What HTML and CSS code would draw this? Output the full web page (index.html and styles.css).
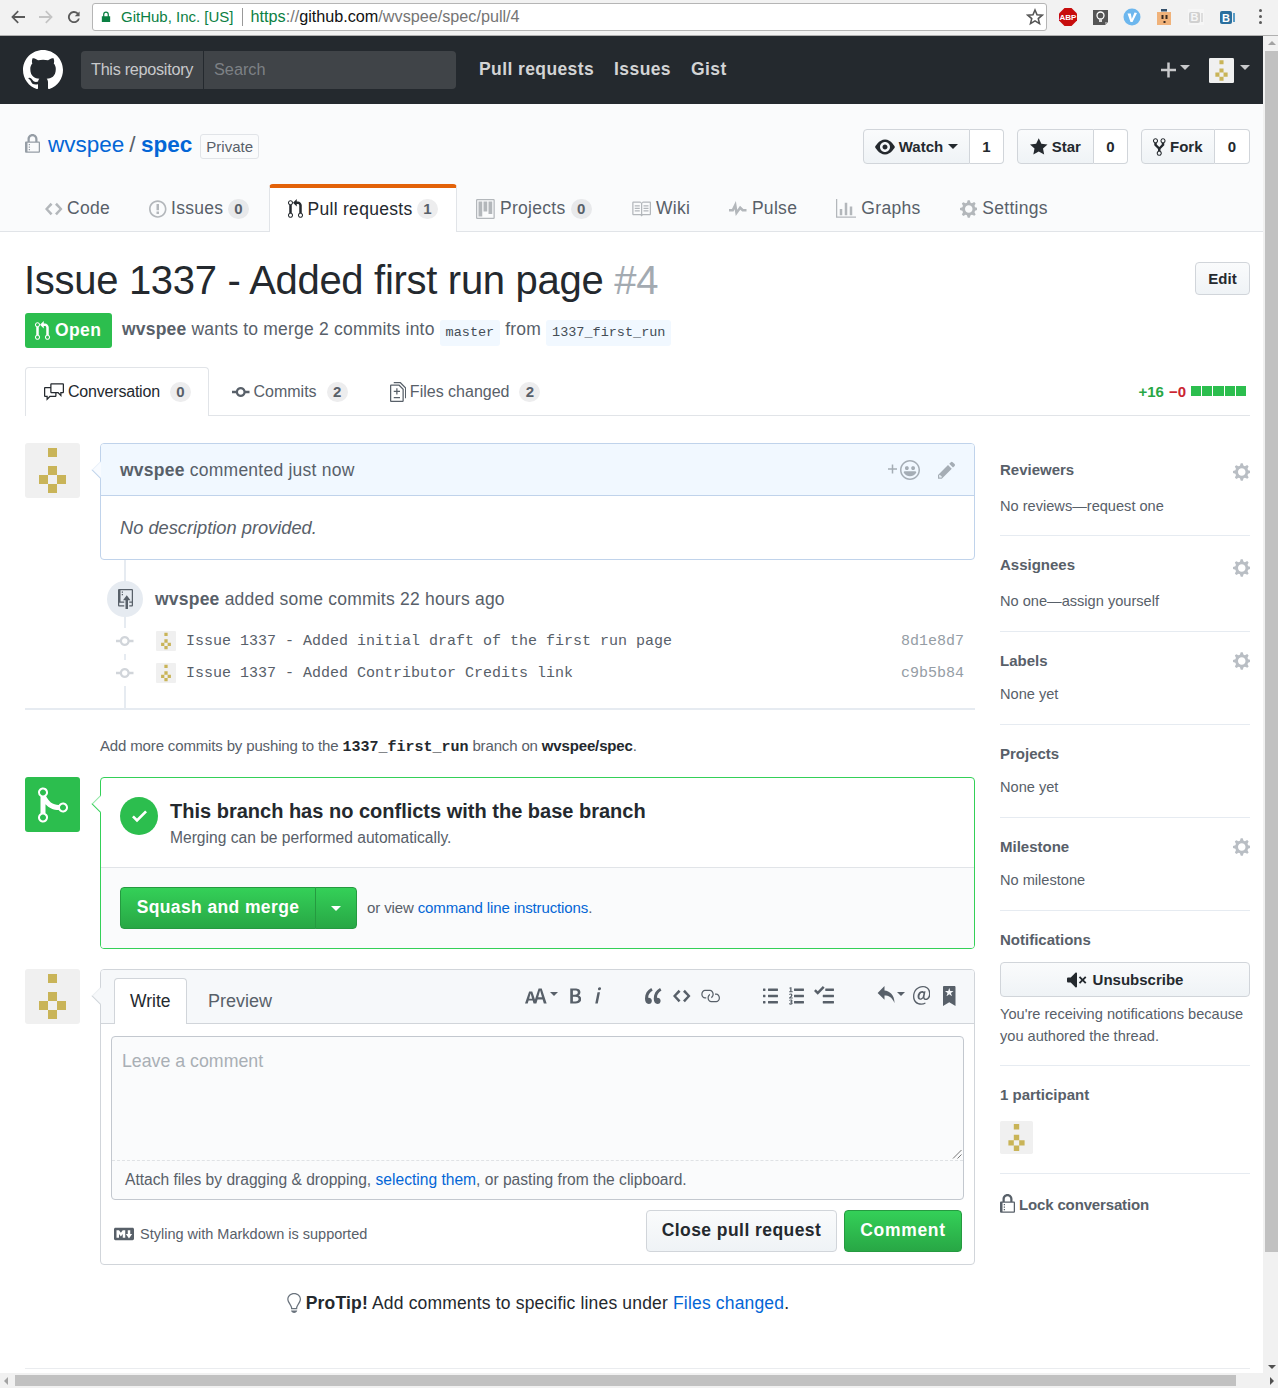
FILE: index.html
```html
<!DOCTYPE html>
<html lang="en">
<head>
    <meta charset="UTF-8">
    <meta name="viewport" content="width=device-width, initial-scale=1.0">
    <title>Issue 1337 - Added first run page by wvspee · Pull Request #4 · wvspee/spec</title>
    <link rel="stylesheet" href="styles.css">
</head>
<body>

<svg class="sprite" aria-hidden="true">
    <defs>
        <path id="i-github" d="M8 0C3.58 0 0 3.58 0 8c0 3.54 2.29 6.53 5.47 7.59.4.07.55-.17.55-.38 0-.19-.01-.82-.01-1.49-2.01.37-2.53-.49-2.69-.94-.09-.23-.48-.94-.82-1.13-.28-.15-.68-.52-.01-.53.63-.01 1.08.58 1.23.82.72 1.21 1.87.87 2.33.66.07-.52.28-.87.51-1.07-1.78-.2-3.64-.89-3.64-3.95 0-.87.31-1.59.82-2.15-.08-.2-.36-1.02.08-2.12 0 0 .67-.21 2.2.82.64-.18 1.32-.27 2-.27.68 0 1.36.09 2 .27 1.53-1.04 2.2-.82 2.2-.82.44 1.1.16 1.92.08 2.12.51.56.82 1.27.82 2.15 0 3.07-1.87 3.75-3.65 3.95.29.25.54.73.54 1.48 0 1.07-.01 1.93-.01 2.2 0 .21.15.46.55.38A8.013 8.013 0 0 0 16 8c0-4.42-3.58-8-8-8z"/>
        <path id="i-pr" d="M11 11.28V5c-.03-.78-.34-1.47-.94-2.06C9.46 2.35 8.78 2.03 8 2H7V0L4 3l3 3V4h1c.27.02.48.11.69.31.21.2.3.42.31.69v6.28A1.993 1.993 0 0 0 10 15a1.993 1.993 0 0 0 1-3.72zm-1 2.92c-.66 0-1.2-.55-1.2-1.2 0-.65.55-1.2 1.2-1.2.65 0 1.2.55 1.2 1.2 0 .65-.55 1.2-1.2 1.2zM4 3c0-1.11-.89-2-2-2a1.993 1.993 0 0 0-1 3.72v6.56A1.993 1.993 0 0 0 2 15a1.993 1.993 0 0 0 1-3.72V4.72c.59-.34 1-.98 1-1.72zm-.8 10c0 .66-.55 1.2-1.2 1.2-.65 0-1.2-.55-1.2-1.2 0-.65.55-1.2 1.2-1.2.65 0 1.2.55 1.2 1.2zM2 4.2C1.34 4.2.8 3.65.8 3c0-.65.55-1.2 1.2-1.2.65 0 1.2.55 1.2 1.2 0 .65-.55 1.2-1.2 1.2z"/>
        <path id="i-code" d="M9.5 3L8 4.5 11.5 8 8 11.5 9.5 13 14 8 9.5 3zm-5 0L0 8l4.5 5L6 11.5 2.5 8 6 4.5 4.5 3z"/>
        <path id="i-issue" d="M7 2.3c3.14 0 5.7 2.56 5.7 5.7s-2.56 5.7-5.7 5.7A5.71 5.71 0 0 1 1.3 8c0-3.14 2.56-5.7 5.7-5.7zM7 1C3.14 1 0 4.14 0 8s3.14 7 7 7 7-3.14 7-7-3.14-7-7-7zm1 3H6v5h2V4zm0 6H6v2h2v-2z"/>
        <path id="i-project" d="M10 12h3V2h-3v10zm-4-2h3V2H6v8zm-4 4h3V2H2v12zm-1 1h13V1H1v14zM14 0H1a1 1 0 0 0-1 1v14a1 1 0 0 0 1 1h13a1 1 0 0 0 1-1V1a1 1 0 0 0-1-1z"/>
        <path id="i-book" d="M3 5h4v1H3V5zm0 3h4V7H3v1zm0 2h4V9H3v1zm11-5h-4v1h4V5zm0 2h-4v1h4V7zm0 2h-4v1h4V9zm2-6v9c0 .55-.45 1-1 1H9.5l-1 1-1-1H2c-.55 0-1-.45-1-1V3c0-.55.45-1 1-1h5.5l1 1 1-1H15c.55 0 1 .45 1 1zm-8 .5L7.5 3H2v9h6V3.5zm7-.5H9.5l-.5.5V12h6V3z"/>
        <path id="i-pulse" d="M11.5 8L8.8 5.4 6.6 8.5 5.5 1.6 2.38 8H0v2h3.6l.9-1.8.9 5.4L9 8.5l1.6 1.5H14V8z"/>
        <path id="i-graph" d="M16 14v1H0V0h1v14h15zM5 13H3V8h2v5zm4 0H7V3h2v10zm4 0h-2V6h2v7z"/>
        <path id="i-gear" d="M14 8.77v-1.6l-1.94-.64-.45-1.09.88-1.84-1.13-1.13-1.81.91-1.09-.45-.69-1.92h-1.6l-.63 1.94-1.11.45-1.84-.88-1.13 1.13.91 1.81-.45 1.09L0 7.23v1.59l1.94.64.45 1.09-.88 1.84 1.13 1.13 1.81-.91 1.09.45.69 1.92h1.59l.63-1.94 1.11-.45 1.84.88 1.13-1.13-.92-1.81.47-1.09L14 8.75v.02zM7 11c-1.66 0-3-1.34-3-3s1.34-3 3-3 3 1.34 3 3-1.34 3-3 3z"/>
        <path id="i-lock" d="M4 13H3v-1h1v1zm8-6v7c0 .55-.45 1-1 1H1c-.55 0-1-.45-1-1V7c0-.55.45-1 1-1h1V4c0-2.2 1.8-4 4-4s4 1.8 4 4v2h1c.55 0 1 .45 1 1zM3.8 6h4.41V4c0-1.22-.98-2.2-2.2-2.2-1.22 0-2.2.98-2.2 2.2v2H3.8zM11 7H2v7h9V7zM4 8H3v1h1V8zm0 2H3v1h1v-1z"/>
        <path id="i-eye" d="M8.06 2C3 2 0 8 0 8s3 6 8.06 6C13 14 16 8 16 8s-3-6-7.94-6zM8 12c-2.2 0-4-1.78-4-4 0-2.2 1.8-4 4-4 2.22 0 4 1.8 4 4 0 2.22-1.78 4-4 4zm2-4c0 1.11-.89 2-2 2-1.11 0-2-.89-2-2 0-1.11.89-2 2-2 1.11 0 2 .89 2 2z"/>
        <path id="i-star" d="M14 6l-4.9-.64L7 1 4.9 5.36 0 6l3.6 3.26L2.67 14 7 11.67 11.33 14l-.93-4.74L14 6z"/>
        <path id="i-fork" d="M8 1a1.993 1.993 0 0 0-1 3.72V6L5 8 3 6V4.72A1.993 1.993 0 0 0 2 1a1.993 1.993 0 0 0-1 3.72V6.5l3 3v1.78A1.993 1.993 0 0 0 5 15a1.993 1.993 0 0 0 1-3.72V9.5l3-3V4.72A1.993 1.993 0 0 0 8 1zM2 4.2C1.34 4.2.8 3.65.8 3c0-.65.55-1.2 1.2-1.2.65 0 1.2.55 1.2 1.2 0 .65-.55 1.2-1.2 1.2zm3 10c-.66 0-1.2-.55-1.2-1.2 0-.65.55-1.2 1.2-1.2.65 0 1.2.55 1.2 1.2 0 .65-.55 1.2-1.2 1.2zm3-10c-.66 0-1.2-.55-1.2-1.2 0-.65.55-1.2 1.2-1.2.65 0 1.2.55 1.2 1.2 0 .65-.55 1.2-1.2 1.2z"/>
        <path id="i-discussion" d="M15 1H6c-.55 0-1 .45-1 1v2H1c-.55 0-1 .45-1 1v6c0 .55.45 1 1 1h1v3l3-3h4c.55 0 1-.45 1-1V9h1l3 3V9h1c.55 0 1-.45 1-1V2c0-.55-.45-1-1-1zM9 11H4.5L3 12.5V11H1V5h4v3c0 .55.45 1 1 1h3v2zm6-3h-2v1.5L11.5 8H6V2h9v6z"/>
        <path id="i-commit" d="M10.86 7c-.45-1.72-2-3-3.86-3-1.86 0-3.41 1.28-3.86 3H0v2h3.14c.45 1.72 2 3 3.86 3 1.86 0 3.41-1.28 3.86-3H14V7h-3.14zM7 10.2c-1.22 0-2.2-.98-2.2-2.2 0-1.22.98-2.2 2.2-2.2 1.22 0 2.2.98 2.2 2.2 0 1.22-.98 2.2-2.2 2.2z"/>
        <path id="i-diff" d="M6 7h2v1H6v2H5V8H3V7h2V5h1v2zm-3 6h5v-1H3v1zM7.5 2L11 5.5V15c0 .55-.45 1-1 1H1c-.55 0-1-.45-1-1V3c0-.55.45-1 1-1h6.5zM10 6L7 3H1v12h9V6zM8.5 0H3v1h5l4 4v8h1V4.5L8.5 0z"/>
        <path id="i-smiley" d="M8 0C3.58 0 0 3.58 0 8s3.58 8 8 8 8-3.58 8-8-3.58-8-8-8zm4.81 12.81a6.72 6.72 0 0 1-2.17 1.45c-.83.36-1.72.53-2.64.53-.92 0-1.81-.17-2.64-.53-.81-.34-1.55-.83-2.17-1.45a6.773 6.773 0 0 1-1.45-2.17A6.59 6.59 0 0 1 1.21 8c0-.92.17-1.81.53-2.64.34-.81.83-1.55 1.45-2.17.62-.62 1.36-1.11 2.17-1.45A6.59 6.59 0 0 1 8 1.21c.92 0 1.81.17 2.64.53.81.34 1.55.83 2.17 1.45.62.62 1.11 1.36 1.45 2.17.36.83.53 1.72.53 2.64 0 .92-.17 1.81-.53 2.64-.34.81-.83 1.55-1.45 2.17zM4 6.8v-.59c0-.66.53-1.19 1.2-1.19h.59c.66 0 1.19.53 1.19 1.19v.59c0 .67-.53 1.2-1.19 1.2H5.2C4.53 8 4 7.47 4 6.8zm5 0v-.59c0-.66.53-1.19 1.2-1.19h.59c.66 0 1.19.53 1.19 1.19v.59c0 .67-.53 1.2-1.19 1.2h-.59C9.53 8 9 7.47 9 6.8zm4 3.2c-.72 1.88-2.91 3-5 3s-4.28-1.13-5-3c-.14-.39.23-1 .66-1h8.59c.41 0 .89.61.75 1z"/>
        <path id="i-pencil" d="M0 12v3h3l8-8-3-3-8 8zm3 2H1v-2h1v1h1v1zm10.3-9.3L12 6 9 3l1.3-1.3a.996.996 0 0 1 1.41 0l1.59 1.59c.39.39.39 1.02 0 1.41z"/>
        <path id="i-push" d="M4 3H3V2h1v1zM3 5h1V4H3v1zm4 0L4 9h2v7h2V9h2L7 5zm4-5H1C.45 0 0 .45 0 1v12c0 .55.45 1 1 1h4v-1H1v-2h4v-1H2V1h9.02L11 10H9v1h2v2H9v1h2c.55 0 1-.45 1-1V1c0-.55-.45-1-1-1z"/>
        <path id="i-merge" d="M10 7c-.73 0-1.38.41-1.73 1.02V8C7.22 7.98 6 7.64 5.14 6.98c-.75-.58-1.5-1.61-1.89-2.44A1.993 1.993 0 0 0 2 .99C.89.99 0 1.89 0 3a2 2 0 0 0 1 1.72v6.56c-.59.35-1 .99-1 1.72 0 1.11.89 2 2 2a1.993 1.993 0 0 0 1-3.72V7.67c.67.7 1.44 1.27 2.3 1.69.86.42 2.03.63 2.97.64v-.02c.36.61 1 1.02 1.73 1.02 1.11 0 2-.89 2-2 0-1.11-.89-2-2-2zm-6.8 6c0 .66-.55 1.2-1.2 1.2-.65 0-1.2-.55-1.2-1.2 0-.65.55-1.2 1.2-1.2.65 0 1.2.55 1.2 1.2zM2 4.2C1.34 4.2.8 3.65.8 3c0-.65.55-1.2 1.2-1.2.65 0 1.2.55 1.2 1.2 0 .65-.55 1.2-1.2 1.2zm8 6c-.66 0-1.2-.55-1.2-1.2 0-.65.55-1.2 1.2-1.2.65 0 1.2.55 1.2 1.2 0 .65-.55 1.2-1.2 1.2z"/>
        <path id="i-check" d="M12 5l-8 8-4-4 1.5-1.5L4 10l6.5-6.5L12 5z"/>
        <path id="i-textsize" d="M13.62 9.08L12.1 3.66h-.06l-1.5 5.42h3.08zM5.7 10.13S4.68 6.52 4.53 6.02h-.08l-1.13 4.11H5.7zM17.31 14h-2.25l-.95-3.25h-4.07L9.09 14H6.84l-.69-2.33H2.87L2.17 14H0l3.3-9.59h2.5l2.17 6.34L10.86 2h2.52l3.94 12h-.01z"/>
        <path id="i-bold" d="M1 2h3.83c2.48 0 4.3.75 4.3 2.95 0 1.14-.63 2.23-1.67 2.61v.06c1.33.3 2.3 1.23 2.3 2.86 0 2.39-1.97 3.52-4.61 3.52H1V2zm3.66 4.95c1.67 0 2.38-.66 2.38-1.69 0-1.17-.78-1.61-2.34-1.61H3.13v3.3h1.53zm.27 5.39c1.77 0 2.75-.64 2.75-1.98 0-1.27-.95-1.81-2.75-1.81h-1.8v3.8h1.8v-.01z"/>
        <path id="i-italic" d="M2.81 5h1.98L3 14H1l1.81-9zm.36-2.7c0-.7.58-1.3 1.33-1.3.56 0 1.13.38 1.13 1.03 0 .75-.59 1.3-1.33 1.3-.58 0-1.13-.38-1.13-1.03z"/>
        <path id="i-quote" d="M6.16 3.5C3.73 5.06 2.55 6.67 2.55 9.36c.16-.05.3-.05.44-.05 1.27 0 2.5.86 2.5 2.41 0 1.61-1.03 2.61-2.5 2.61-1.9 0-2.99-1.52-2.99-4.25 0-3.8 1.75-6.53 5.02-8.42L6.16 3.5zm7 0c-2.43 1.56-3.61 3.17-3.61 5.86.16-.05.3-.05.44-.05 1.27 0 2.5.86 2.5 2.41 0 1.61-1.03 2.61-2.5 2.61-1.89 0-2.98-1.52-2.98-4.25 0-3.8 1.75-6.53 5.02-8.42l1.14 1.84h-.01z"/>
        <path id="i-link" d="M4 9h1v1H4c-1.5 0-3-1.69-3-3.5S2.55 3 4 3h4c1.45 0 3 1.69 3 3.5 0 1.41-.91 2.72-2 3.25V8.59c.58-.45 1-1.27 1-2.09C10 5.22 8.98 4 8 4H4c-.98 0-2 1.22-2 2.5S3 9 4 9zm9-3h-1v1h1c1 0 2 1.22 2 2.5S13.98 12 13 12H9c-.98 0-2-1.22-2-2.5 0-.83.42-1.64 1-2.09V6.25c-1.09.53-2 1.84-2 3.25C6 11.31 7.55 13 9 13h4c1.45 0 3-1.69 3-3.5S14.5 6 13 6z"/>
        <path id="i-ul" d="M2 13c0 .59 0 1-.59 1H.59C0 14 0 13.59 0 13c0-.59 0-1 .59-1h.81c.59 0 .59.41.59 1H2zm2.59-9h6.81c.59 0 .59-.41.59-1 0-.59 0-1-.59-1H4.59C4 2 4 2.41 4 3c0 .59 0 1 .59 1zM1.41 7H.59C0 7 0 7.41 0 8c0 .59 0 1 .59 1h.81c.59 0 .59-.41.59-1 0-.59 0-1-.59-1h.01zm0-5H.59C0 2 0 2.41 0 3c0 .59 0 1 .59 1h.81c.59 0 .59-.41.59-1 0-.59 0-1-.59-1h.01zm10 5H4.59C4 7 4 7.41 4 8c0 .59 0 1 .59 1h6.81c.59 0 .59-.41.59-1 0-.59 0-1-.59-1h.01zm0 5H4.59C4 12 4 12.41 4 13c0 .59 0 1 .59 1h6.81c.59 0 .59-.41.59-1 0-.59 0-1-.59-1h.01z"/>
        <path id="i-ol" d="M12 13c0 .59 0 1-.59 1H4.59C4 14 4 13.59 4 13c0-.59 0-1 .59-1h6.81c.59 0 .59.41.59 1H12zM4.59 4h6.81c.59 0 .59-.41.59-1 0-.59 0-1-.59-1H4.59C4 2 4 2.41 4 3c0 .59 0 1 .59 1zm6.81 3H4.59C4 7 4 7.41 4 8c0 .59 0 1 .59 1h6.81c.59 0 .59-.41.59-1 0-.59 0-1-.59-1zM2 1h-.72c-.3.19-.58.25-1.03.34V2H1v2.14H.16V5H3v-.86H2V1zm.25 8.13c-.17 0-.45.03-.66.06.53-.56 1.14-1.25 1.14-1.89C2.71 6.52 2.17 6 1.37 6c-.59 0-.97.2-1.38.64l.58.58c.19-.19.38-.38.64-.38.28 0 .48.16.48.52 0 .53-.77 1.2-1.7 2.06V10h3v-.88h-.75l.01.01zm-.08 3.69v-.03c.44-.19.64-.47.64-.86 0-.7-.56-1.11-1.44-1.11-.48 0-.89.19-1.28.52l.55.64c.25-.2.44-.31.69-.31.27 0 .42.13.42.36 0 .27-.2.44-.86.44v.75c.83 0 .98.17.98.47 0 .25-.23.38-.58.38-.28 0-.56-.14-.81-.38l-.48.66c.3.36.77.56 1.41.56.83 0 1.53-.41 1.53-1.16-.02-.45-.29-.75-.77-.89z"/>
        <path id="i-task" d="M15.41 9H7.59C7 9 7 8.59 7 8c0-.59 0-1 .59-1h7.81c.59 0 .59.41.59 1 0 .59 0 1-.59 1h.01zM9.59 4C9 4 9 3.59 9 3c0-.59 0-1 .59-1h5.81c.59 0 .59.41.59 1 0 .59 0 1-.59 1H9.59zM0 3.91l1.41-1.3L3 4.2 7.09 0 8.5 1.41 3 6.91l-3-3zM7.59 12h7.81c.59 0 .59.41.59 1 0 .59 0 1-.59 1H7.59C7 14 7 13.59 7 13c0-.59 0-1 .59-1z"/>
        <path id="i-reply" d="M6 3.5c3.92.44 8 3.125 8 10-2.312-5.062-4.75-6-8-6V11L.5 5.5 6 0v3.5z"/>
        <path id="i-mention" d="M6.58 15c1.25 0 2.52-.31 3.56-.94l-.42-.94c-.84.52-1.89.83-3.03.83-3.23 0-5.64-2.08-5.64-5.72 0-4.37 3.23-7.18 6.58-7.18 3.45 0 5.22 2.19 5.22 5.2 0 2.39-1.34 3.86-2.5 3.86-1.05 0-1.36-.73-1.05-2.19l.73-3.75H8.98l-.11.72c-.41-.63-.94-.83-1.56-.83-2.19 0-3.66 2.39-3.66 4.38 0 1.67.94 2.61 2.3 2.61.84 0 1.67-.53 2.3-1.25.11.94.94 1.45 1.98 1.45 1.67 0 3.77-1.67 3.77-5C14 2.61 11.59 0 7.83 0 3.66 0 0 3.33 0 8.33 0 12.71 2.92 15 6.58 15zm-.31-5c-.73 0-1.12-.52-1.12-1.45 0-1.67 1.05-3.22 2.2-3.22.41 0 .73.21 1.05.73l-.73 3.02c-.52.63-1.05.91-1.4.91V10z"/>
        <path id="i-bookmark" d="M9 0H1C.27 0 0 .27 0 1v15l5-3.09L10 16V1c0-.73-.27-1-1-1zm-.78 4.25L6.36 5.61l.72 2.16c.06.22-.02.28-.2.17L5 6.6 3.12 7.94c-.19.11-.25.05-.2-.17l.72-2.16-1.86-1.36c-.17-.16-.14-.23.09-.23l2.3-.03.7-2.16h.25l.7 2.16 2.3.03c.23 0 .27.08.09.23h.01z"/>
        <path id="i-mute" d="M8 2.81v10.38c0 .67-.81 1-1.28.53L3 10H1c-.55 0-1-.45-1-1V7c0-.55.45-1 1-1h2l3.72-3.72C7.19 1.81 8 2.14 8 2.81zm7.53 3.22l-1.06-1.06-1.97 1.97-1.97-1.97-1.06 1.06L11.44 8 9.47 9.97l1.06 1.06 1.97-1.97 1.97 1.97 1.06-1.06L13.56 8l1.97-1.97z"/>
        <path id="i-markdown" d="M14.85 3H1.15C.52 3 0 3.52 0 4.15v7.69C0 12.48.52 13 1.15 13h13.69c.64 0 1.15-.52 1.15-1.15v-7.7C16 3.52 15.48 3 14.85 3zM9 11H7V8L5.5 9.92 4 8v3H2V5h2l1.5 2L7 5h2v6zm2.99.5L9.5 8H11V5h2v3h1.5l-2.51 3.5z"/>
        <path id="i-bulb" d="M6.5 0C3.48 0 1 2.19 1 5c0 .92.55 2.25 1 3 1.34 2.25 1.78 2.78 2 4v1h5v-1c.22-1.22.66-1.75 2-4 .45-.75 1-2.08 1-3 0-2.81-2.48-5-5.5-5zm3.64 7.48c-.25.44-.47.8-.67 1.11-.86 1.41-1.25 2.06-1.45 3.23-.02.05-.02.11-.02.17H5c0-.06 0-.13-.02-.17-.2-1.17-.59-1.83-1.45-3.23-.2-.31-.42-.67-.67-1.11C2.44 6.78 2 5.65 2 5c0-2.2 2.02-4 4.5-4 1.22 0 2.36.42 3.22 1.19C10.55 2.94 11 3.94 11 5c0 .66-.44 1.78-.86 2.48zM4 14h5c-.23 1.14-1.3 2-2.5 2s-2.27-.86-2.5-2z"/>
        <path id="i-plus" d="M12 9H7v5H5V9H0V7h5V2h2v5h5v2z"/>
        <g id="i-identicon">
            <rect width="55" height="55" rx="3" fill="#f0f0f0"/>
            <path d="M23 5h9v9h-9zM23 23h9v9h-9zM14 32h9v9h-9zM32 32h9v9h-9zM23 41h9v9h-9z" fill="#c9b458"/>
        </g>
    </defs>
</svg>

<div class="browser-bar">
    <svg class="nav-btn" viewBox="0 0 16 16"><path d="M15 7H4.6l4.2-4.2L7.6 1.6 1.2 8l6.4 6.4 1.2-1.2L4.6 9H15z" fill="#5a5a5a"/></svg>
    <svg class="nav-btn" viewBox="0 0 16 16"><path d="M1 7h10.4L7.2 2.8l1.2-1.2L14.8 8l-6.4 6.4-1.2-1.2L11.4 9H1z" fill="#c4c4c4"/></svg>
    <svg class="nav-btn" viewBox="0 0 16 16"><path d="M13.6 2.4v4.8H8.8l2.1-2.1A4.2 4.2 0 1 0 12 9.4h1.8A6 6 0 1 1 12.2 3.8z" fill="#5a5a5a"/></svg>
    <div class="url-box">
        <svg class="url-lock" viewBox="0 0 12 14"><path d="M2.5 6V4a3.5 3.5 0 0 1 7 0v2H11v7H1V6zM4 6h4V4a2 2 0 0 0-4 0z" fill="#0b8043"/></svg>
        <span class="url-org">GitHub, Inc. [US]</span>
        <span class="url-sep"></span>
        <span class="url-text"><span class="url-org">https</span>://<b>github.com</b>/wvspee/spec/pull/4</span>
        <svg class="url-star" viewBox="0 0 16 16"><path d="M8 1.8l1.8 4.2 4.6.4-3.5 3 1.1 4.5L8 11.5l-4 2.4 1.1-4.5-3.5-3 4.6-.4z" fill="none" stroke="#555" stroke-width="1.4"/></svg>
    </div>
    <div class="ext-list">
        <svg class="ext" viewBox="0 0 18 18"><path d="M5.5 0h7L18 5.500v7L12.500 18h-7L0 12.500v-7z" fill="#c70d0d"/><text x="9" y="12" class="ext-abp">ABP</text></svg>
        <svg class="ext" viewBox="0 0 18 18"><path d="M2 2h15v12l-3 3H2z" fill="#555"/><path d="M14 14h3l-3 3z" fill="#999"/><circle cx="9.500" cy="7.500" r="3.500" fill="none" stroke="#fff" stroke-width="1.300"/><path d="M8 11h3v3H8z" fill="#ddd"/></svg>
        <svg class="ext" viewBox="0 0 18 18"><circle cx="9" cy="9" r="8.500" fill="#6db7ee"/><path d="M4.500 5.500h3.300l1 5.500 2.700-6.500 2.500.5-4.500 9H7.500z" fill="#fff"/></svg>
        <svg class="ext" viewBox="0 0 18 18"><path d="M2 4h14v13H2z" fill="#f0b27a"/><path d="M6 1h6v2.500H6z" fill="#35506b"/><path d="M6.500 7h2v4h-2zM10.500 7h2v4h-2zM8.500 13h2v2h-2z" fill="#3a2a20"/></svg>
        <svg class="ext" viewBox="0 0 18 18"><path d="M1 1h16v16H1z" fill="#f6f6f6"/><rect x="2" y="4" width="11" height="11" rx="2" fill="#d0d0d0"/><text x="7.500" y="13" class="ext-b ext-b-grey">B</text><path d="M14 5h2v9h-2z" fill="#ddd"/></svg>
        <svg class="ext" viewBox="0 0 18 18"><rect x="1" y="3" width="12" height="13" rx="2" fill="#2a6f9e"/><text x="7" y="13.500" class="ext-b">B</text><path d="M14 5h2v9h-2z" fill="#5a9cc5"/></svg>
        <span class="kebab"><i></i><i></i><i></i></span>
    </div>
</div>

<div class="viewport">
    <div class="page">
        <header class="site-head">
            <svg class="site-logo" viewBox="0 0 16 16"><use href="#i-github"/></svg>
            <div class="site-search">
                <span class="search-scope">This repository</span>
                <span class="search-input">Search</span>
            </div>
            <nav class="site-nav">
                <a>Pull requests</a>
                <a>Issues</a>
                <a>Gist</a>
            </nav>
            <div class="site-user">
                <svg class="plus-icon" viewBox="0 0 12 16"><use href="#i-plus"/></svg>
                <span class="caret caret-head"></span>
                <svg class="user-avatar" viewBox="0 0 55 55"><use href="#i-identicon"/></svg>
                <span class="caret caret-head"></span>
            </div>
        </header>

        <section class="repo-head">
            <div class="repo-row">
                <h1 class="repo-title">
                    <svg class="ico repo-lock" viewBox="0 0 12 16"><use href="#i-lock"/></svg>
                    <a class="repo-owner">wvspee</a>
                    <span class="repo-slash">/</span>
                    <a class="repo-name">spec</a>
                    <span class="private-label">Private</span>
                </h1>
                <div class="repo-actions">
                    <div class="btn-group">
                        <span class="btn-sm btn-watch"><svg class="ico" viewBox="0 0 16 16"><use href="#i-eye"/></svg>Watch<span class="caret caret-dark"></span></span>
                        <span class="btn-count count-watch">1</span>
                    </div>
                    <div class="btn-group">
                        <span class="btn-sm btn-star"><svg class="ico" viewBox="0 0 14 16"><use href="#i-star"/></svg>Star</span>
                        <span class="btn-count count-star">0</span>
                    </div>
                    <div class="btn-group">
                        <span class="btn-sm btn-fork"><svg class="ico" viewBox="0 0 10 16"><use href="#i-fork"/></svg>Fork</span>
                        <span class="btn-count count-fork">0</span>
                    </div>
                </div>
            </div>
            <nav class="repo-tabs">
                <a class="repo-tab"><svg class="ico" viewBox="0 0 14 16"><use href="#i-code"/></svg>Code</a>
                <a class="repo-tab"><svg class="ico" viewBox="0 0 14 16"><use href="#i-issue"/></svg>Issues<span class="counter">0</span></a>
                <a class="repo-tab selected"><svg class="ico" viewBox="0 0 12 16"><use href="#i-pr"/></svg>Pull requests<span class="counter">1</span></a>
                <a class="repo-tab"><svg class="ico" viewBox="0 0 15 16"><use href="#i-project"/></svg>Projects<span class="counter">0</span></a>
                <a class="repo-tab"><svg class="ico" viewBox="0 0 16 16"><use href="#i-book"/></svg>Wiki</a>
                <a class="repo-tab"><svg class="ico" viewBox="0 0 14 16"><use href="#i-pulse"/></svg>Pulse</a>
                <a class="repo-tab"><svg class="ico" viewBox="0 0 16 16"><use href="#i-graph"/></svg>Graphs</a>
                <a class="repo-tab"><svg class="ico" viewBox="0 0 14 16"><use href="#i-gear"/></svg>Settings</a>
            </nav>
        </section>

        <main class="container">
            <div class="pr-title-row">
                <h1 class="pr-title">Issue 1337 - Added first run page <span class="pr-number">#4</span></h1>
                <span class="btn-edit">Edit</span>
            </div>
            <div class="pr-meta">
                <span class="state-open"><svg class="ico" viewBox="0 0 12 16"><use href="#i-pr"/></svg>Open</span>
                <span class="meta-text"><b>wvspee</b> wants to merge 2 commits into</span>
                <code class="branch">master</code>
                <span class="meta-text">from</span>
                <code class="branch">1337_first_run</code>
            </div>

            <nav class="pr-tabs">
                <a class="pr-tab selected"><svg class="ico" viewBox="0 0 16 16"><use href="#i-discussion"/></svg>Conversation<span class="counter">0</span></a>
                <a class="pr-tab tab-commits"><svg class="ico" viewBox="0 0 14 16"><use href="#i-commit"/></svg>Commits<span class="counter">2</span></a>
                <a class="pr-tab tab-files"><svg class="ico" viewBox="0 0 13 16"><use href="#i-diff"/></svg>Files changed<span class="counter">2</span></a>
                <div class="diffstat">
                    <span class="add">+16</span>
                    <span class="del">−0</span>
                    <span class="diff-bars"><i></i><i></i><i></i><i></i><i></i></span>
                </div>
            </nav>

            <div class="columns">
                <div class="discussion">
                    <div class="tl-row">
                        <svg class="avatar" viewBox="0 0 55 55"><use href="#i-identicon"/></svg>
                        <div class="comment">
                            <div class="comment-head">
                                <span class="comment-who"><b>wvspee</b> commented just now</span>
                                <span class="comment-actions">
                                    <svg class="ico plus-small" viewBox="0 0 12 16"><use href="#i-plus"/></svg>
                                    <svg class="ico" viewBox="0 0 16 16"><use href="#i-smiley"/></svg>
                                    <svg class="ico pencil" viewBox="0 0 14 16"><use href="#i-pencil"/></svg>
                                </span>
                            </div>
                            <div class="comment-body">No description provided.</div>
                        </div>
                    </div>

                    <div class="timeline">
                        <div class="tl-event">
                            <span class="tl-badge"><svg class="ico" viewBox="0 0 12 16"><use href="#i-push"/></svg></span>
                            <span class="tl-text"><b>wvspee</b> added some commits 22 hours ago</span>
                        </div>
                        <div class="commit-row">
                            <span class="commit-dot"><svg class="ico" viewBox="0 0 14 16"><use href="#i-commit"/></svg></span>
                            <svg class="avatar-xs" viewBox="0 0 55 55"><use href="#i-identicon"/></svg>
                            <span class="commit-msg">Issue 1337 - Added initial draft of the first run page</span>
                            <span class="commit-sha">8d1e8d7</span>
                        </div>
                        <div class="commit-row">
                            <span class="commit-dot"><svg class="ico" viewBox="0 0 14 16"><use href="#i-commit"/></svg></span>
                            <svg class="avatar-xs" viewBox="0 0 55 55"><use href="#i-identicon"/></svg>
                            <span class="commit-msg">Issue 1337 - Added Contributor Credits link</span>
                            <span class="commit-sha">c9b5b84</span>
                        </div>
                    </div>

                    <p class="push-hint">Add more commits by pushing to the <code>1337_first_run</code> branch on <b>wvspee/spec</b>.</p>

                    <div class="tl-row">
                        <span class="merge-icon"><svg class="ico" viewBox="0 0 12 16"><use href="#i-merge"/></svg></span>
                        <div class="merge-box">
                            <div class="merge-status">
                                <span class="check-circle"><svg class="ico" viewBox="0 0 12 16"><use href="#i-check"/></svg></span>
                                <div>
                                    <h3 class="merge-title">This branch has no conflicts with the base branch</h3>
                                    <p class="merge-sub">Merging can be performed automatically.</p>
                                </div>
                            </div>
                            <div class="merge-actions">
                                <span class="btn-merge">Squash and merge</span><span class="btn-merge-caret"><span class="caret caret-white"></span></span>
                                <span class="merge-alt">or view <a class="link">command line instructions</a>.</span>
                            </div>
                        </div>
                    </div>

                    <div class="tl-row form-row">
                        <svg class="avatar" viewBox="0 0 55 55"><use href="#i-identicon"/></svg>
                        <div class="comment-form">
                            <div class="form-head">
                                <span class="form-tab selected">Write</span>
                                <span class="form-tab">Preview</span>
                                <div class="toolbar">
                                    <div class="tb-group">
                                        <span class="tb-pair"><svg class="ico" viewBox="0 0 18 16"><use href="#i-textsize"/></svg><span class="caret caret-tb"></span></span>
                                        <svg class="ico" viewBox="0 0 10 16"><use href="#i-bold"/></svg>
                                        <svg class="ico tb-wide" viewBox="0 0 6 16"><use href="#i-italic"/></svg>
                                    </div>
                                    <div class="tb-group">
                                        <svg class="ico" viewBox="0 0 14 16"><use href="#i-quote"/></svg>
                                        <svg class="ico" viewBox="0 0 14 16"><use href="#i-code"/></svg>
                                        <svg class="ico tb-tighter" viewBox="0 0 16 16"><use href="#i-link"/></svg>
                                    </div>
                                    <div class="tb-group">
                                        <svg class="ico" viewBox="0 0 12 16"><use href="#i-ul"/></svg>
                                        <svg class="ico tb-half" viewBox="0 0 12 16"><use href="#i-ol"/></svg>
                                        <svg class="ico tb-tight" viewBox="0 0 16 16"><use href="#i-task"/></svg>
                                    </div>
                                    <div class="tb-group">
                                        <span class="tb-pair"><svg class="ico" viewBox="0 0 14 16"><use href="#i-reply"/></svg><span class="caret caret-tb"></span></span>
                                        <svg class="ico tb-at" viewBox="0 0 14 16"><use href="#i-mention"/></svg>
                                        <svg class="ico tb-wide" viewBox="0 0 10 16"><use href="#i-bookmark"/></svg>
                                    </div>
                                </div>
                            </div>
                            <div class="editor">
                                <div class="editor-input">
                                    Leave a comment
                                    <svg class="grip" viewBox="0 0 10 10"><path d="M9.500 1L1 9.500M9.500 5.500L5.500 9.500" stroke="#777" stroke-width="1" fill="none"/></svg>
                                </div>
                                <div class="editor-drop">Attach files by dragging &amp; dropping, <a class="link">selecting them</a>, or pasting from the clipboard.</div>
                            </div>
                            <div class="form-foot">
                                <span class="md-note"><svg class="ico" viewBox="0 0 16 16"><use href="#i-markdown"/></svg>Styling with Markdown is supported</span>
                                <span class="btn-close">Close pull request</span>
                                <span class="btn-comment">Comment</span>
                            </div>
                        </div>
                    </div>

                    <p class="protip"><svg class="ico" viewBox="0 0 12 16"><use href="#i-bulb"/></svg><b>ProTip!</b> Add comments to specific lines under <a class="link">Files changed</a>.</p>
                </div>

                <aside class="sidebar">
                    <section class="side-section side-first">
                        <h3 class="side-title">Reviewers<svg class="ico" viewBox="0 0 14 16"><use href="#i-gear"/></svg></h3>
                        <p class="side-text">No reviews—request one</p>
                    </section>
                    <section class="side-section side-wide">
                        <h3 class="side-title">Assignees<svg class="ico" viewBox="0 0 14 16"><use href="#i-gear"/></svg></h3>
                        <p class="side-text">No one—assign yourself</p>
                    </section>
                    <section class="side-section">
                        <h3 class="side-title">Labels<svg class="ico" viewBox="0 0 14 16"><use href="#i-gear"/></svg></h3>
                        <p class="side-text">None yet</p>
                    </section>
                    <section class="side-section">
                        <h3 class="side-title">Projects</h3>
                        <p class="side-text">None yet</p>
                    </section>
                    <section class="side-section">
                        <h3 class="side-title">Milestone<svg class="ico" viewBox="0 0 14 16"><use href="#i-gear"/></svg></h3>
                        <p class="side-text">No milestone</p>
                    </section>
                    <section class="side-section side-notify">
                        <h3 class="side-title">Notifications</h3>
                        <span class="btn-unsub"><svg class="ico" viewBox="0 0 16 16"><use href="#i-mute"/></svg>Unsubscribe</span>
                        <p class="side-reason">You're receiving notifications because you authored the thread.</p>
                    </section>
                    <section class="side-section side-people">
                        <h3 class="side-title">1 participant</h3>
                        <svg class="avatar-sm" viewBox="0 0 55 55"><use href="#i-identicon"/></svg>
                    </section>
                    <div class="side-lock"><svg class="ico" viewBox="0 0 12 16"><use href="#i-lock"/></svg>Lock conversation</div>
                </aside>
            </div>
            <div class="page-foot"></div>
        </main>
    </div>

    <div class="vscroll">
        <span class="arrow arrow-up"></span>
        <span class="vthumb"></span>
        <span class="arrow arrow-down"></span>
    </div>
</div>

<div class="hscroll">
    <span class="arrow arrow-left"></span>
    <span class="hthumb"></span>
    <span class="arrow arrow-right"></span>
</div>

</body>
</html>
```

FILE: styles.css
```css
* {
    box-sizing: border-box;
}
html, body {
    margin: 0;
    height: 1388px;
    overflow: hidden;
}
body {
    font-family: "Liberation Sans", Arial, sans-serif;
    font-size: 17.5px;
    color: #24292e;
    background-color: #fff;
}
h1, h3, p {
    margin: 0;
}
.sprite {
    position: absolute;
    width: 0;
    height: 0;
}
.ico {
    height: 20px;
    width: auto;
    fill: currentColor;
    fill-rule: evenodd;
    flex: none;
    display: block;
}
.link {
    color: #0366d6;
}

/* browser chrome */
.browser-bar {
    height: 36px;
    background-color: #f2f2f2;
    border-bottom: 1px solid #b0b0b0;
    display: flex;
    align-items: center;
    padding: 0 9px 2px 10px;
}
.nav-btn {
    width: 16px;
    height: 16px;
    margin-right: 12px;
    flex: none;
}
.url-box {
    width: 955px;
    height: 28px;
    margin-left: -2px;
    background-color: #fff;
    border: 1px solid #b5b5b5;
    border-radius: 3px;
    display: flex;
    align-items: center;
    font-size: 15px;
    color: #757575;
    padding: 0 2px 0 8px;
}
.url-lock {
    width: 10px;
    height: 12px;
    margin-right: 10px;
}
.url-org {
    color: #0b8043;
}
.url-sep {
    width: 1px;
    height: 18px;
    background-color: #999;
    margin: 0 8px;
}
.url-text {
    font-size: 16.200px;
}
.url-text b {
    font-weight: normal;
    color: #111;
}
.url-star {
    width: 18px;
    height: 18px;
    margin-left: auto;
}
.ext-list {
    display: flex;
    align-items: center;
    margin-left: 12px;
    gap: 14px;
}
.ext {
    width: 18px;
    height: 18px;
}
.ext-abp {
    font-size: 8px;
    font-weight: bold;
    fill: #fff;
    text-anchor: middle;
}
.ext-b {
    font-size: 11px;
    font-weight: bold;
    fill: #fff;
    text-anchor: middle;
}
.ext-b-grey {
    fill: #f6f6f6;
}
.kebab {
    display: flex;
    flex-direction: column;
    gap: 3px;
    margin-left: 8px;
}
.kebab i {
    width: 3px;
    height: 3px;
    background-color: #5a5a5a;
    border-radius: 50%;
}

/* viewport + scrollbars */
.viewport {
    display: flex;
    height: 1337px;
}
.page {
    width: 1263px;
    flex: none;
    background-color: #fff;
    overflow: hidden;
}
.vscroll {
    width: 15px;
    background-color: #f1f1f1;
    display: flex;
    flex-direction: column;
    align-items: flex-end;
}
.vthumb {
    width: 13px;
    height: 1201px;
    background-color: #c1c1c1;
}
.hscroll {
    height: 15px;
    background-color: #f1f1f1;
    display: flex;
    align-items: center;
}
.hthumb {
    width: 1221px;
    height: 11px;
    background-color: #c1c1c1;
}
.arrow {
    display: block;
    width: 0;
    height: 0;
    border: 4px solid transparent;
}
.arrow-up {
    border-bottom-color: #a3a3a3;
    border-top-width: 0;
    margin: 5px 2.500px 6px 0;
}
.arrow-down {
    border-top-color: #505050;
    border-bottom-width: 0;
    margin: auto 2.500px 4px 0;
}
.arrow-left {
    border-right-color: #a3a3a3;
    border-left-width: 0;
    margin: 0 7px 0 4px;
}
.arrow-right {
    border-left-color: #505050;
    border-right-width: 0;
    margin: 0 4px 0 auto;
}

/* site header */
.site-head {
    height: 68px;
    background-color: #24292e;
    display: flex;
    align-items: center;
    padding: 0 13px 0 23px;
}
.site-logo {
    width: 40px;
    height: 40px;
    fill: #fff;
    fill-rule: evenodd;
    flex: none;
}
.site-search {
    width: 375px;
    height: 38px;
    margin-left: 18px;
    background-color: #404448;
    border-radius: 4px;
    display: flex;
    align-items: center;
    font-size: 16.250px;
}
.search-scope {
    width: 123px;
    height: 100%;
    line-height: 36px;
    padding-left: 10px;
    color: #c8c9cb;
    border-right: 1px solid #24292e;
    letter-spacing: -0.300px;
}
.search-input {
    padding-left: 10px;
    padding-bottom: 2px;
    color: #7d8185;
}
.site-nav {
    display: flex;
    gap: 20px;
    margin-left: 23px;
    margin-top: -2px;
    font-weight: bold;
    color: #d3d4d5;
    letter-spacing: 0.400px;
}
.site-user {
    margin-left: auto;
    display: flex;
    align-items: center;
}
.plus-icon {
    height: 20px;
    width: 15px;
    fill: #c8c9cb;
}
.caret {
    display: inline-block;
    width: 0;
    height: 0;
    border: 5px solid transparent;
    border-top-color: currentColor;
    border-bottom-width: 0;
}
.caret-head {
    color: #c8c9cb;
    margin-left: 4px;
    margin-top: -6px;
}
.caret-white {
    color: #fff;
}
.user-avatar {
    width: 25px;
    height: 25px;
    margin-left: 19px;
    margin-right: 2px;
}

/* repo head */
.repo-head {
    height: 128px;
    background-color: #fafbfc;
    border-bottom: 1px solid #e1e4e8;
    padding: 25px 13px 0 25px;
}
.repo-row {
    display: flex;
    justify-content: space-between;
    height: 35px;
}
.repo-title {
    display: flex;
    align-items: center;
    font-size: 22.500px;
    font-weight: normal;
    height: 35px;
    margin-top: -2px;
}
.repo-lock {
    color: #959da5;
    margin-right: 8px;
    margin-top: -2px;
}
.repo-owner, .repo-name {
    color: #0366d6;
}
.repo-name {
    font-weight: bold;
}
.repo-slash {
    color: #586069;
    margin: 0 5.500px 0 5px;
}
.private-label {
    font-size: 15px;
    color: #586069;
    border: 1px solid #e1e4e8;
    border-radius: 3px;
    height: 25px;
    line-height: 24px;
    padding: 0 5px;
    margin-left: 8px;
    margin-top: 3px;
}
.repo-actions {
    display: flex;
    gap: 13px;
}
.btn-group {
    display: flex;
    height: 35px;
    font-size: 15px;
    font-weight: bold;
}
.btn-sm {
    display: flex;
    align-items: center;
    gap: 4px;
    justify-content: center;
    background: linear-gradient(#fafbfc, #eff3f6);
    border: 1px solid #d1d5da;
    border-radius: 4px 0 0 4px;
}
.btn-count {
    background-color: #fff;
    border: 1px solid #d1d5da;
    border-left: 0;
    border-radius: 0 4px 4px 0;
    display: flex;
    align-items: center;
    justify-content: center;
}
.btn-watch { width: 107px; }
.count-watch { width: 34px; }
.btn-star { width: 77px; }
.count-star { width: 34px; }
.btn-fork { width: 74px; }
.count-fork { width: 35px; }
.caret-dark {
    margin-left: 1px;
}
.repo-tabs {
    display: flex;
    margin-top: 20px;
    height: 48px;
    padding-left: 1px;
}
.repo-tab {
    display: flex;
    align-items: center;
    gap: 4.500px;
    padding: 1px 19px 0;
    color: #586069;
    height: 48px;
    margin-right: 1px;
    letter-spacing: 0.300px;
}
.repo-tab .ico {
    color: #b3b7bb;
}
.repo-tab.selected {
    background-color: #fff;
    color: #24292e;
    border: 1px solid #e1e4e8;
    border-top: 4px solid #e36209;
    border-bottom: 0;
    border-radius: 4px 4px 0 0;
    padding: 0 18px 2px;
    margin-right: 0;
}
.repo-tab.selected .ico {
    color: #24292e;
}
.repo-tab.selected ~ .repo-tab {
    gap: 5.200px;
}
.counter {
    display: inline-block;
    min-width: 21px;
    height: 20px;
    line-height: 20px;
    border-radius: 10px;
    background-color: rgba(27, 31, 35, 0.08);
    color: #586069;
    font-size: 15px;
    font-weight: bold;
    text-align: center;
    letter-spacing: 0;
}

/* pull request head */
.container {
    padding: 0 13px 0 25px;
}
.pr-title-row {
    display: flex;
    justify-content: space-between;
    padding-top: 24px;
}
.pr-title {
    font-size: 40px;
    font-weight: normal;
    line-height: 48px;
    letter-spacing: -0.300px;
    margin-left: -1px;
}
.pr-number {
    color: #a3aab1;
}
.btn-edit {
    margin-top: 6px;
    height: 33px;
    width: 55px;
    line-height: 31px;
    text-align: center;
    font-size: 15px;
    font-weight: bold;
    background: linear-gradient(#fafbfc, #eff3f6);
    border: 1px solid #d1d5da;
    border-radius: 4px;
}
.pr-meta {
    display: flex;
    align-items: center;
    margin-top: 9px;
    height: 35px;
    color: #586069;
}
.state-open {
    width: 87px;
    height: 35px;
    background-color: #2cbe4e;
    color: #fff;
    font-weight: bold;
    border-radius: 3px;
    display: flex;
    align-items: center;
    padding-left: 10px;
    gap: 5px;
    margin-right: 10px;
    letter-spacing: 0.400px;
}
.meta-text {
    margin-top: -2px;
    letter-spacing: 0.200px;
}
.branch {
    font-family: "Liberation Mono", monospace;
    font-size: 13.500px;
    color: #444d56;
    background-color: #f1f8ff;
    border-radius: 3px;
    height: 26px;
    line-height: 25px;
    padding: 0 6px;
    margin: 4px 5px 0;
}
.pr-tabs {
    display: flex;
    align-items: stretch;
    height: 49px;
    margin-top: 19px;
    border-bottom: 1px solid #e1e4e8;
    font-size: 16px;
    color: #586069;
}
.pr-tab {
    display: flex;
    align-items: center;
    height: 49px;
    padding: 0 19px;
    gap: 4px;
}
.pr-tab .counter {
    margin-left: 6px;
}
.pr-tab.selected {
    color: #24292e;
    background-color: #fff;
    border: 1px solid #e1e4e8;
    border-bottom: 0;
    border-radius: 4px 4px 0 0;
    padding: 0 18px 1px;
    width: 184px;
    letter-spacing: -0.200px;
}
.tab-commits {
    margin-left: 4px;
}
.tab-files {
    margin-left: 4px;
}
.diffstat {
    margin-left: auto;
    display: flex;
    align-items: center;
    gap: 5px;
    font-size: 15px;
    font-weight: bold;
    padding-right: 4px;
}
.add {
    color: #28a745;
}
.del {
    color: #cb2431;
}
.diff-bars {
    display: flex;
    gap: 1px;
}
.diff-bars i {
    width: 10.200px;
    height: 10px;
    background-color: #2cbe4e;
}

/* columns */
.columns {
    display: flex;
    margin-top: 27px;
    gap: 25px;
}
.discussion {
    width: 950px;
    flex: none;
}
.sidebar {
    width: 250px;
    flex: none;
}
.tl-row {
    display: flex;
    gap: 20px;
}
.avatar {
    width: 55px;
    height: 55px;
    flex: none;
}
.comment, .merge-box, .comment-form {
    position: relative;
    width: 875px;
    border-radius: 4px;
}
.comment::before, .merge-box::before, .comment-form::before {
    content: "";
    position: absolute;
    left: -7px;
    top: 20px;
    width: 11px;
    height: 11px;
    background-color: #fff;
    border-left: 1px solid #eceef1;
    border-bottom: 1px solid #d1d5da;
    transform: rotate(45deg);
}
.comment {
    border: 1px solid #c0d3eb;
}
.comment::before {
    background-color: #f8fbff;
    border-left-color: #eaf1f9;
    border-bottom-color: #c0d3eb;
}
.comment-head {
    position: relative;
    height: 52px;
    background-color: #f1f8ff;
    border-bottom: 1px solid #c0d3eb;
    border-radius: 3px 3px 0 0;
    display: flex;
    align-items: center;
    justify-content: space-between;
    padding: 0 19px;
    color: #586069;
}
.comment-who {
    letter-spacing: 0.240px;
    padding-top: 1px;
}
.comment-actions {
    display: flex;
    align-items: center;
    color: #a5adb5;
}
.plus-small {
    height: 12px;
    margin-top: -2px;
    margin-right: 3px;
}
.pencil {
    margin-left: 18px;
}
.comment-body {
    height: 63px;
    line-height: 64px;
    padding-left: 19px;
    font-style: italic;
    font-size: 18.250px;
    color: #586069;
}

/* timeline */
.timeline {
    position: relative;
    height: 150px;
    border-bottom: 2px solid #e6ebf1;
    color: #586069;
}
.timeline::before {
    content: "";
    position: absolute;
    left: 99px;
    top: 0;
    bottom: 0;
    width: 2px;
    background-color: #e6ebf1;
}
.tl-event {
    position: relative;
    display: flex;
    align-items: center;
    gap: 12px;
    padding: 21px 0 0 82px;
    height: 57px;
}
.tl-text {
    letter-spacing: 0.220px;
}
.tl-badge {
    width: 36px;
    height: 36px;
    border-radius: 50%;
    background-color: #e6ebf1;
    color: #586069;
    display: flex;
    align-items: center;
    justify-content: center;
}
.commit-row {
    position: relative;
    display: flex;
    align-items: center;
    height: 32px;
    padding-right: 11px;
}
.tl-event + .commit-row {
    margin-top: 8px;
}
.commit-dot {
    margin-left: 91px;
    width: 18px;
    background-color: #fff;
    color: #d1d5da;
    padding: 3px 0;
}
.avatar-xs {
    width: 20px;
    height: 20px;
    margin-left: 22px;
    flex: none;
}
.commit-msg, .commit-sha {
    font-family: "Liberation Mono", monospace;
    font-size: 15px;
    color: #586069;
}
.commit-msg {
    margin-left: 10px;
}
.commit-sha {
    margin-left: auto;
    color: #959da5;
}
.push-hint {
    margin: 26px 0 21px 75px;
    height: 20px;
    font-size: 15px;
    line-height: 20px;
    color: #586069;
    letter-spacing: -0.150px;
}
.push-hint code {
    font-family: "Liberation Mono", monospace;
    font-weight: bold;
    color: #24292e;
    letter-spacing: 0;
}
.push-hint b {
    color: #24292e;
}

/* merge box */
.merge-icon {
    width: 55px;
    height: 55px;
    flex: none;
    background-color: #2cbe4e;
    border-radius: 3px;
    color: #fff;
    display: flex;
    align-items: center;
    justify-content: center;
}
.merge-icon .ico {
    height: 40px;
}
.merge-box {
    height: 172px;
    border: 1px solid #34d058;
}
.merge-box::before {
    border-left-color: #8ee6a3;
    border-bottom-color: #34d058;
}
.merge-status {
    position: relative;
    height: 90px;
    display: flex;
    gap: 12px;
    padding: 19px 0 0 19px;
    border-bottom: 1px solid #e1e4e8;
}
.check-circle {
    width: 38px;
    height: 38px;
    border-radius: 50%;
    background-color: #2cbe4e;
    color: #fff;
    display: flex;
    align-items: center;
    justify-content: center;
    flex: none;
}
.merge-title {
    font-size: 20px;
    line-height: 28px;
}
.merge-sub {
    font-size: 15.600px;
    line-height: 22px;
    margin-top: 2px;
    color: #586069;
}
.merge-actions {
    height: 80px;
    background-color: #fafbfc;
    border-radius: 0 0 3px 3px;
    padding: 19px 0 0 19px;
    display: flex;
    align-items: flex-start;
}
.btn-merge, .btn-merge-caret, .btn-comment {
    height: 42px;
    line-height: 38px;
    color: #fff;
    font-weight: bold;
    background: linear-gradient(#34d058, #28a745);
    border: 1px solid #259a40;
}
.btn-merge {
    width: 196px;
    text-align: center;
    border-radius: 4px 0 0 4px;
    letter-spacing: 0.380px;
}
.btn-merge-caret {
    width: 42px;
    margin-left: -1px;
    border-radius: 0 4px 4px 0;
    display: flex;
    align-items: center;
    justify-content: center;
}
.merge-alt {
    margin-left: 10px;
    font-size: 15px;
    line-height: 42px;
    color: #586069;
    letter-spacing: -0.120px;
}

/* comment form */
.form-row {
    margin-top: 20px;
}
.comment-form {
    height: 296px;
    border: 1px solid #d1d5da;
}
.comment-form::before {
    background-color: #f6f8fa;
}
.form-head {
    position: relative;
    height: 54px;
    background-color: #f6f8fa;
    border-bottom: 1px solid #d1d5da;
    border-radius: 3px 3px 0 0;
    display: flex;
    align-items: flex-end;
    padding-left: 13px;
}
.form-tab {
    height: 46px;
    line-height: 46px;
    padding: 0 16px;
    margin-bottom: -1px;
    margin-right: 5px;
    color: #586069;
    font-size: 18px;
}
.form-tab.selected {
    width: 73px;
    background-color: #fff;
    color: #24292e;
    font-size: 17.500px;
    line-height: 44px;
    border: 1px solid #d1d5da;
    border-bottom: 0;
    border-radius: 4px 4px 0 0;
    padding: 0 15px;
}
.toolbar {
    margin-left: auto;
    align-self: center;
    display: flex;
    gap: 43px;
    padding: 0 18.500px 2px 0;
    color: #586069;
}
.tb-group {
    display: flex;
    align-items: center;
    gap: 11px;
}
.tb-wide {
    margin-left: 2px;
}
.tb-half {
    margin-left: 0.500px;
}
.tb-tight {
    margin-left: -1px;
}
.tb-tighter {
    margin-left: -2px;
}
.tb-at {
    margin-left: -3px;
}
.tb-pair {
    display: flex;
    align-items: center;
    gap: 2px;
}
.caret-tb {
    margin-top: -4px;
    border-width: 4.500px;
    border-bottom-width: 0;
}
.editor {
    margin: 12px 10px 0;
    height: 164px;
    border: 1px solid #c3c8cf;
    border-radius: 4px;
    background-color: #fafbfc;
}
.editor-input {
    position: relative;
    height: 124px;
    padding: 14px 10px;
    font-size: 17.750px;
    color: #a9afb5;
    border-bottom: 1px dashed #dfe2e5;
}
.grip {
    position: absolute;
    right: 1px;
    bottom: 1px;
    width: 10px;
    height: 10px;
}
.editor-drop {
    height: 38px;
    line-height: 38px;
    padding-left: 13px;
    font-size: 15.600px;
    color: #586069;
}
.form-foot {
    display: flex;
    align-items: flex-start;
    padding: 10px 12px 0 13px;
}
.md-note {
    display: flex;
    align-items: center;
    gap: 6px;
    height: 47px;
    font-size: 14.500px;
    color: #586069;
}
.btn-close, .btn-comment {
    height: 42px;
    line-height: 38px;
    font-weight: bold;
    border-radius: 4px;
    text-align: center;
}
.btn-close {
    margin-left: auto;
    width: 191px;
    background: linear-gradient(#fafbfc, #eff3f6);
    border: 1px solid #d1d5da;
    letter-spacing: 0.440px;
}
.btn-comment {
    margin-left: 7px;
    width: 118px;
    letter-spacing: 0.700px;
}
.protip {
    margin: 28px 0 0 75px;
    height: 20px;
    display: flex;
    align-items: center;
    justify-content: center;
    white-space: pre;
    font-size: 17.500px;
    letter-spacing: 0.170px;
}
.protip .ico {
    color: #6a737d;
    margin-right: 5px;
}
.page-foot {
    margin-top: 55px;
    border-top: 1px solid #eaecef;
}

/* sidebar */
.side-section {
    height: 93px;
    padding-top: 17px;
    border-bottom: 1px solid #e6ebf1;
}
.side-first {
    padding-top: 15px;
}
.side-wide {
    height: 96px;
}
.side-title {
    display: flex;
    justify-content: space-between;
    align-items: center;
    height: 22px;
    font-size: 15px;
    color: #586069;
}
.side-title .ico {
    color: #b9bec4;
    margin-top: 2px;
}
.side-first .side-title .ico {
    margin-top: 6px;
}
.side-wide .side-title .ico {
    margin-top: 8px;
}
.side-text {
    margin-top: 12px;
    font-size: 14.600px;
    line-height: 22px;
    color: #586069;
}
.side-wide .side-text, .side-first .side-text {
    margin-top: 15px;
}
.side-notify {
    height: 155px;
}
.btn-unsub {
    display: flex;
    align-items: center;
    justify-content: center;
    gap: 6px;
    height: 35px;
    margin-top: 12px;
    font-size: 15px;
    font-weight: bold;
    background: linear-gradient(#fafbfc, #eff3f6);
    border: 1px solid #d1d5da;
    border-radius: 4px;
}
.side-reason {
    margin-top: 6px;
    font-size: 14.600px;
    line-height: 22px;
    color: #586069;
}
.side-people {
    height: 108px;
}
.avatar-sm {
    display: block;
    width: 33px;
    height: 33px;
    margin-top: 16px;
}
.side-lock {
    display: flex;
    align-items: center;
    gap: 4px;
    margin-top: 20px;
    font-size: 15px;
    font-weight: bold;
    color: #586069;
    letter-spacing: -0.150px;
}
```
